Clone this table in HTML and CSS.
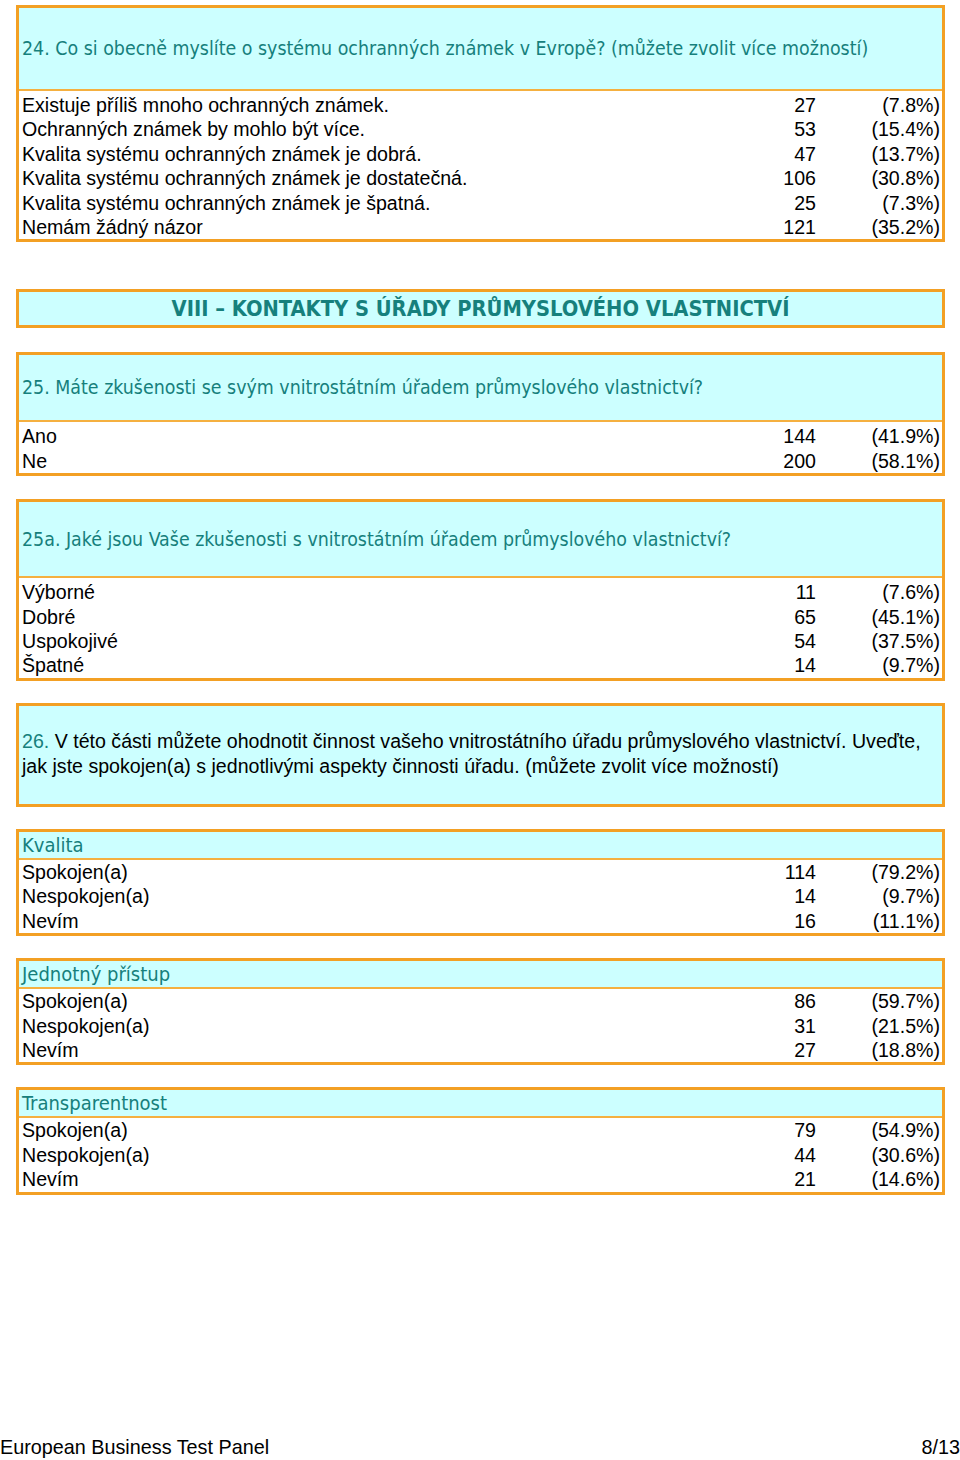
FILE: index.html
```html
<!DOCTYPE html>
<html lang="cs">
<head>
<meta charset="utf-8">
<title>European Business Test Panel 8/13</title>
<link rel="stylesheet" href="styles.css">
</head>
<body>
<div class="page">
  <section class="box box-q24">
    <div class="q q-tall">24. Co si obecně myslíte o systému ochranných známek v Evropě? (můžete zvolit více možností)</div>
    <div class="rows">
      <span class="lbl">Existuje příliš mnoho ochranných známek.</span><span class="num">27</span><span class="pct">(7.8%)</span>
      <span class="lbl">Ochranných známek by mohlo být více.</span><span class="num">53</span><span class="pct">(15.4%)</span>
      <span class="lbl">Kvalita systému ochranných známek je dobrá.</span><span class="num">47</span><span class="pct">(13.7%)</span>
      <span class="lbl">Kvalita systému ochranných známek je dostatečná.</span><span class="num">106</span><span class="pct">(30.8%)</span>
      <span class="lbl">Kvalita systému ochranných známek je špatná.</span><span class="num">25</span><span class="pct">(7.3%)</span>
      <span class="lbl">Nemám žádný názor</span><span class="num">121</span><span class="pct">(35.2%)</span>
    </div>
  </section>

  <section class="box box-section">
    <h2 class="section-title">VIII – KONTAKTY S ÚŘADY PRŮMYSLOVÉHO VLASTNICTVÍ</h2>
  </section>

  <section class="box box-q25">
    <div class="q q-mid">25. Máte zkušenosti se svým vnitrostátním úřadem průmyslového vlastnictví?</div>
    <div class="rows">
      <span class="lbl">Ano</span><span class="num">144</span><span class="pct">(41.9%)</span>
      <span class="lbl">Ne</span><span class="num">200</span><span class="pct">(58.1%)</span>
    </div>
  </section>

  <section class="box box-q25a">
    <div class="q q-big">25a. Jaké jsou Vaše zkušenosti s vnitrostátním úřadem průmyslového vlastnictví?</div>
    <div class="rows">
      <span class="lbl">Výborné</span><span class="num">11</span><span class="pct">(7.6%)</span>
      <span class="lbl">Dobré</span><span class="num">65</span><span class="pct">(45.1%)</span>
      <span class="lbl">Uspokojivé</span><span class="num">54</span><span class="pct">(37.5%)</span>
      <span class="lbl">Špatné</span><span class="num">14</span><span class="pct">(9.7%)</span>
    </div>
  </section>

  <section class="box box-q26">
    <p class="q26-text"><span class="qnum">26.</span> V této části můžete ohodnotit činnost vašeho vnitrostátního úřadu průmyslového vlastnictví. Uveďte, jak jste spokojen(a) s jednotlivými aspekty činnosti úřadu. (můžete zvolit více možností)</p>
  </section>

  <section class="box box-sub">
    <div class="q q-sub">Kvalita</div>
    <div class="rows rows-tight">
      <span class="lbl">Spokojen(a)</span><span class="num">114</span><span class="pct">(79.2%)</span>
      <span class="lbl">Nespokojen(a)</span><span class="num">14</span><span class="pct">(9.7%)</span>
      <span class="lbl">Nevím</span><span class="num">16</span><span class="pct">(11.1%)</span>
    </div>
  </section>

  <section class="box box-sub">
    <div class="q q-sub">Jednotný přístup</div>
    <div class="rows rows-tight">
      <span class="lbl">Spokojen(a)</span><span class="num">86</span><span class="pct">(59.7%)</span>
      <span class="lbl">Nespokojen(a)</span><span class="num">31</span><span class="pct">(21.5%)</span>
      <span class="lbl">Nevím</span><span class="num">27</span><span class="pct">(18.8%)</span>
    </div>
  </section>

  <section class="box box-sub">
    <div class="q q-sub">Transparentnost</div>
    <div class="rows rows-tight">
      <span class="lbl">Spokojen(a)</span><span class="num">79</span><span class="pct">(54.9%)</span>
      <span class="lbl">Nespokojen(a)</span><span class="num">44</span><span class="pct">(30.6%)</span>
      <span class="lbl">Nevím</span><span class="num">21</span><span class="pct">(14.6%)</span>
    </div>
  </section>
</div>

<footer class="footer">
  <span>European Business Test Panel</span>
  <span>8/13</span>
</footer>
</body>
</html>
```

FILE: styles.css
```css
html, body {
  margin: 0;
  padding: 0;
  background: #ffffff;
}

body {
  width: 960px;
  height: 1460px;
  position: relative;
  font-family: "Liberation Sans", Arial, sans-serif;
  color: #000000;
}

.page {
  display: flex;
  flex-direction: column;
  padding: 5px 0 0 16px;
  width: 929px;
}

.box {
  border: 3px solid #f3a024;
  background: #ffffff;
}

.box-section { margin-top: 47px; background: #ccffff; }
.box-q25 { margin-top: 24px; }
.box-q25a { margin-top: 23px; }
.box-q26 { margin-top: 22px; background: #ccffff; }
.box-sub { margin-top: 22px; }

.q {
  background: #ccffff;
  color: #16807c;
  font-family: "DejaVu Sans Condensed", "DejaVu Sans", sans-serif;
  font-stretch: condensed;
  font-size: 19.4px;
  display: flex;
  align-items: center;
  padding: 0 3px;
  border-bottom: 2px solid #f5b040;
  white-space: nowrap;
}

.q-tall { height: 81px; }
.q-mid { height: 65px; }
.q-big { height: 74px; }
.q-sub { height: 26px; font-size: 20px; }

.rows {
  display: grid;
  grid-template-columns: 1fr 80px 124px;
  padding: 2px 2px 0 3px;
  font-size: 19.6px;
  line-height: 24.4px;
}

.rows-tight { padding-top: 0; }

.num, .pct { text-align: right; }

.section-title {
  margin: 0;
  height: 33px;
  display: flex;
  align-items: center;
  justify-content: center;
  color: #16807c;
  font-family: "DejaVu Sans Condensed", "DejaVu Sans", sans-serif;
  font-stretch: condensed;
  font-weight: bold;
  font-size: 21.7px;
}

.q26-text {
  margin: 0;
  height: 98px;
  box-sizing: border-box;
  padding: 23px 3px 0 3px;
  font-size: 19.6px;
  line-height: 25px;
}

.qnum {
  color: #16807c;
}

.footer {
  position: absolute;
  left: 0;
  right: 0;
  top: 1436px;
  display: flex;
  justify-content: space-between;
  font-size: 19.8px;
  line-height: 22px;
}
```
